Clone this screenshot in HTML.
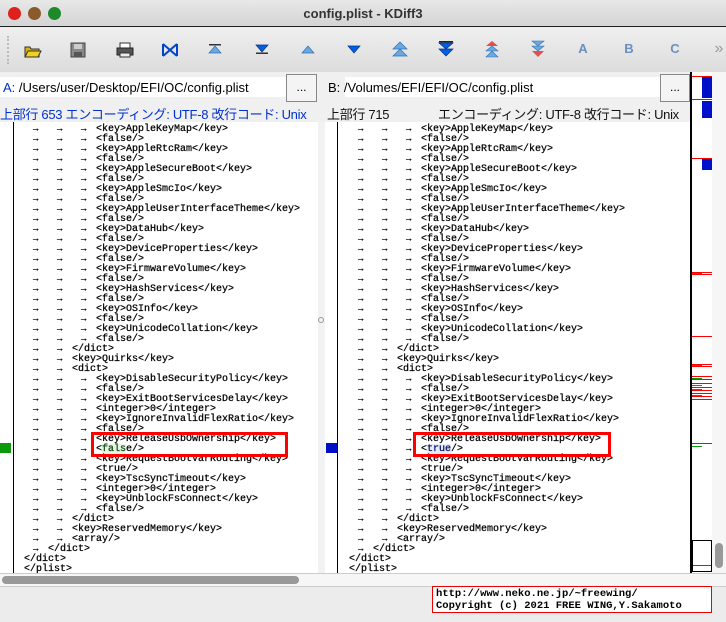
<!DOCTYPE html>
<html><head><meta charset="utf-8"><style>
*{margin:0;padding:0;box-sizing:border-box}
body{width:726px;height:622px;overflow:hidden;background:#ececec;font-family:"Liberation Sans","Noto Sans CJK JP",sans-serif;position:relative}
.abs{position:absolute}
.title{left:0;top:0;width:726px;height:27px;background:linear-gradient(#e8e8e8,#d4d4d4);border-bottom:1px solid #222;text-align:center;font-size:13px;font-weight:bold;line-height:27px;color:#333}
.dot{top:7px;width:13px;height:13px;border-radius:50%}
.tb{top:28px;left:0;width:726px;height:44px;background:linear-gradient(#efefef,#dcdcdc)}
.ic{top:40px;font-size:16px;line-height:18px;width:22px;text-align:center}
.code{font-family:"Liberation Mono",monospace;font-size:10px;line-height:10px;color:#000;white-space:pre;-webkit-text-stroke:0.25px #000}
.row{position:absolute;height:10px}
.arr{position:absolute;font-size:9px;line-height:10px;color:#000;font-weight:bold}
</style></head><body>
<div class="abs title">config.plist - KDiff3</div>
<div class="abs dot" style="left:8px;background:#e0201c"></div>
<div class="abs dot" style="left:28px;background:#8b5a2b"></div>
<div class="abs dot" style="left:48px;background:#1d8a2a"></div>
<div class="abs tb"></div>
<div class="abs" style="left:7px;top:36px;width:3px;height:28px;border-left:2px dotted #bbb"></div>
<svg class="abs" style="left:24px;top:42px" width="18" height="16"><path d="M1 5h5l1 2h8v8H1z" fill="#d8b400" stroke="#333"/><path d="M1 15l3-6h13l-3 6z" fill="#f0d020" stroke="#333"/></svg>
<svg class="abs" style="left:70px;top:42px" width="16" height="16"><rect x="1" y="1" width="14" height="14" fill="#888" stroke="#444"/><rect x="4" y="2" width="8" height="5" fill="#ccc"/><rect x="4" y="10" width="8" height="5" fill="#555"/></svg>
<svg class="abs" style="left:116px;top:42px" width="18" height="16"><rect x="4" y="1" width="10" height="6" fill="#fff" stroke="#333"/><rect x="1" y="6" width="16" height="7" fill="#555" stroke="#222"/><rect x="4" y="11" width="10" height="4" fill="#eee" stroke="#333"/></svg>
<svg class="abs" style="left:162px;top:43px" width="16" height="14"><path d="M1 1v12M15 1v12M1 1l7 6-7 6M15 1l-7 6 7 6" fill="none" stroke="#0044cc" stroke-width="2"/></svg>
<svg class="abs" style="left:208px;top:44px" width="14" height="10"><rect x="1" y="0" width="12" height="1.5" fill="#333"/><path d="M7 2l6 7H1z" fill="#6aa8e0" stroke="#3070b0" stroke-width=".7"/></svg>
<svg class="abs" style="left:255px;top:44px" width="14" height="10"><path d="M1 1h12l-6 7z" fill="#0060e0" stroke="#003090" stroke-width=".7"/><rect x="1" y="8.5" width="12" height="1.5" fill="#333"/></svg>
<svg class="abs" style="left:301px;top:45px" width="14" height="9"><path d="M7 1l6 7H1z" fill="#6aa8e0" stroke="#3070b0" stroke-width=".7"/></svg>
<svg class="abs" style="left:347px;top:45px" width="14" height="9"><path d="M1 1h12l-6 7z" fill="#0060e0" stroke="#003090" stroke-width=".7"/></svg>
<svg class="abs" style="left:392px;top:41px" width="16" height="16"><path d="M8 1l7 7H1zM8 8l7 7H1z" fill="#6aa8e0" stroke="#3070b0" stroke-width=".7"/></svg>
<svg class="abs" style="left:438px;top:41px" width="16" height="16"><rect x="1" y="0" width="14" height="1.5" fill="#222"/><path d="M1 2h14l-7 6zM1 8h14l-7 7z" fill="#0060e0" stroke="#003090" stroke-width=".7"/></svg>
<svg class="abs" style="left:484px;top:40px" width="16" height="18"><path d="M8 1l6 5H2z" fill="#e05050"/><path d="M8 6l6 5H2zM8 11l6 6H2z" fill="#6aa8e0" stroke="#3070b0" stroke-width=".6"/></svg>
<svg class="abs" style="left:530px;top:40px" width="16" height="18"><path d="M2 1h12l-6 5zM2 6h12l-6 5z" fill="#6aa8e0" stroke="#3070b0" stroke-width=".6"/><path d="M2 11h12l-6 6z" fill="#e05050"/></svg>
<div class="abs ic" style="left:572px;color:#6a8fc0;font-weight:bold;font-size:13px">A</div>
<div class="abs ic" style="left:618px;color:#6a8fc0;font-weight:bold;font-size:13px">B</div>
<div class="abs ic" style="left:664px;color:#6a8fc0;font-weight:bold;font-size:13px">C</div>
<div class="abs ic" style="left:708px;color:#999">»</div>

<div class="abs" style="left:0;top:72px;width:690px;height:50px;background:#f0f0f0"></div>
<div class="abs" style="left:0;top:77px;width:286px;height:20px;background:#fff"></div>
<div class="abs" style="left:3px;top:80px;font-size:13px;color:#000"><span style="color:#0030d0">A:</span> /Users/user/Desktop/EFI/OC/config.plist</div>
<div class="abs" style="left:286px;top:74px;width:31px;height:28px;border:1px solid #888;background:#f4f4f4;font-size:12px;text-align:center;line-height:24px">...</div>
<div class="abs" style="left:345px;top:77px;width:315px;height:20px;background:#fff"></div>
<div class="abs" style="left:328px;top:80px;font-size:13px">B: /Volumes/EFI/EFI/OC/config.plist</div>
<div class="abs" style="left:660px;top:74px;width:30px;height:28px;border:1px solid #888;background:#f4f4f4;font-size:12px;text-align:center;line-height:24px">...</div>
<div class="abs" style="left:0;top:104px;font-size:13px;color:#0030d0;letter-spacing:-0.3px">上部行 653 エンコーディング: UTF-8 改行コード: Unix</div>
<div class="abs" style="left:327px;top:104px;font-size:13px;color:#111;letter-spacing:-0.3px">上部行 715</div>
<div class="abs" style="left:438px;top:104px;font-size:13px;color:#111;letter-spacing:-0.3px">エンコーディング: UTF-8 改行コード: Unix</div>

<div class="abs" style="left:0;top:122px;width:318px;height:451px;background:#fff"></div>
<div class="abs" style="left:318px;top:122px;width:7px;height:451px;background:#f2f2f2"></div>
<div class="abs" style="left:325px;top:122px;width:365px;height:451px;background:#fff"></div>
<div class="abs" style="left:13px;top:122px;width:1px;height:451px;background:#000"></div>
<div class="abs" style="left:337px;top:122px;width:1px;height:451px;background:#000"></div>
<div class="abs" style="left:0;top:443px;width:11px;height:10px;background:#0a9a0a"></div>
<div class="abs" style="left:326px;top:443px;width:11px;height:10px;background:#0010c8"></div>
<div class="abs" style="left:318px;top:317px;width:6px;height:6px;border:1px solid #999;border-radius:50%"></div>
<div id="L" class="abs code" style="left:0;top:122px;width:318px;height:451px;overflow:hidden"></div>
<div id="R" class="abs code" style="left:325px;top:122px;width:365px;height:451px;overflow:hidden"></div>
<div class="abs" style="left:91px;top:432px;width:197px;height:25px;border:3px solid #f00"></div>
<div class="abs" style="left:413px;top:432px;width:198px;height:25px;border:3px solid #f00"></div>

<div class="abs" style="left:690px;top:72px;width:22px;height:501px;background:#fff;border-left:2px solid #000"></div>
<div class="abs" style="left:702px;top:77px;width:10px;height:21px;background:#0010c8"></div>
<div class="abs" style="left:702px;top:101px;width:10px;height:17px;background:#0010c8"></div>
<div class="abs" style="left:702px;top:158px;width:10px;height:12px;background:#0010c8"></div>
<div id="O"></div>
<div class="abs" style="left:692px;top:540px;width:20px;height:32px;border:1px solid #000"></div>
<div class="abs" style="left:712px;top:72px;width:14px;height:501px;background:#f6f6f6"></div>
<div class="abs" style="left:715px;top:543px;width:8px;height:25px;background:#999;border-radius:4px"></div>
<div class="abs" style="left:0;top:573px;width:726px;height:13px;background:#f6f6f6;border-top:1px solid #ccc"></div>
<div class="abs" style="left:2px;top:576px;width:297px;height:8px;background:#999;border-radius:4px"></div>
<div class="abs" style="left:0;top:586px;width:726px;height:36px;background:#ececec;border-top:1px solid #ccc"></div>
<div class="abs" style="left:432px;top:586px;width:280px;height:27px;border:1px solid #e00;background:#fff;font-family:'Liberation Mono',monospace;font-size:10.5px;line-height:12px;padding:1px 3px;font-weight:bold;color:#000;white-space:pre">http://www.neko.ne.jp/~freewing/
Copyright (c) 2021 FREE WING,Y.Sakamoto</div>
<script>
var L=[[3,'<key>AppleKeyMap</key>'],[3,'<false/>'],[3,'<key>AppleRtcRam</key>'],[3,'<false/>'],[3,'<key>AppleSecureBoot</key>'],[3,'<false/>'],[3,'<key>AppleSmcIo</key>'],[3,'<false/>'],[3,'<key>AppleUserInterfaceTheme</key>'],[3,'<false/>'],[3,'<key>DataHub</key>'],[3,'<false/>'],[3,'<key>DeviceProperties</key>'],[3,'<false/>'],[3,'<key>FirmwareVolume</key>'],[3,'<false/>'],[3,'<key>HashServices</key>'],[3,'<false/>'],[3,'<key>OSInfo</key>'],[3,'<false/>'],[3,'<key>UnicodeCollation</key>'],[3,'<false/>'],[2,'</dict>'],[2,'<key>Quirks</key>'],[2,'<dict>'],[3,'<key>DisableSecurityPolicy</key>'],[3,'<false/>'],[3,'<key>ExitBootServicesDelay</key>'],[3,'<integer>0</integer>'],[3,'<key>IgnoreInvalidFlexRatio</key>'],[3,'<false/>'],[3,'<key>ReleaseUsbOwnership</key>'],[3,'X'],[3,'<key>RequestBootVarRouting</key>'],[3,'<true/>'],[3,'<key>TscSyncTimeout</key>'],[3,'<integer>0</integer>'],[3,'<key>UnblockFsConnect</key>'],[3,'<false/>'],[2,'</dict>'],[2,'<key>ReservedMemory</key>'],[2,'<array/>'],[1,'</dict>'],[0,'</dict>'],[0,'</plist>']];
function esc(s){return s.replace(/&/g,'&amp;').replace(/</g,'&lt;').replace(/>/g,'&gt;')}
function build(id,sp){var h='';L.forEach(function(l,i){var y=i*10+3;for(var k=0;k<l[0];k++)h+='<span class="arr" style="left:'+(33+24*k)+'px;top:'+(y-1)+'px">→</span>';var t=l[1];var s;if(t=='X'){s=sp}else s=esc(t);h+='<span class="row" style="left:'+(24+24*l[0])+'px;top:'+y+'px">'+s+'</span>'});document.getElementById(id).innerHTML=h}
build('L','&lt;<span style="color:#0a8a0a;background:#e8f4e8">fals</span>e/&gt;');
build('R','&lt;<span style="color:#0020c0;background:#e8eaf8">true</span>/&gt;');
var o='',ys=[76,99,158,272,274,336,364,366,376,379,383,387,390,393,396,399,443,565];
ys.forEach(function(y){o+='<div class="abs" style="left:692px;top:'+y+'px;width:20px;height:1px;background:#f00"></div>'});
[273,365,378,385,389,395,446].forEach(function(y){o+='<div class="abs" style="left:692px;top:'+y+'px;width:10px;height:1px;background:#0a9a0a"></div>'});
document.getElementById('O').innerHTML=o;
</script>
</body></html>
